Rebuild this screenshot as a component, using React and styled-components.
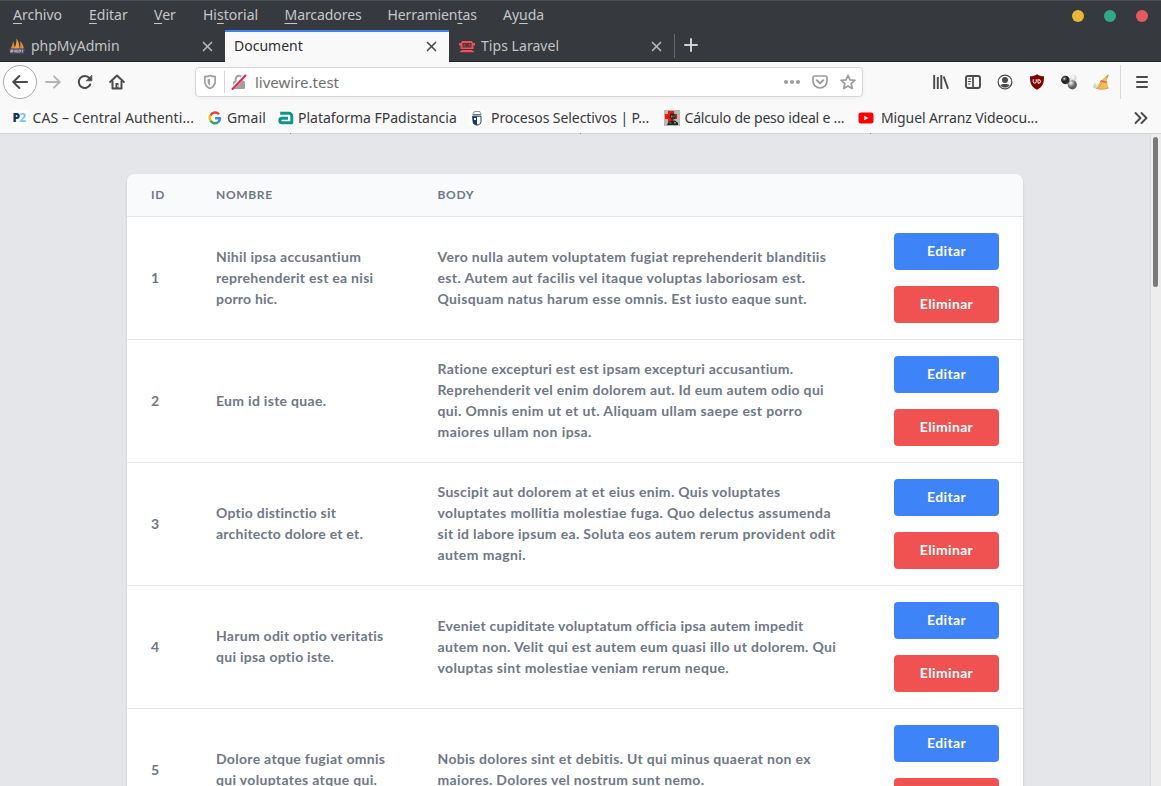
import React from 'react';
import styled, { createGlobalStyle } from 'styled-components';

const GlobalStyle = createGlobalStyle`
  *, *::before, *::after { box-sizing: border-box; }
  body { margin: 0; background: #e5e6ea; overflow: hidden; }
`;

/* ---------- browser window ---------- */

const Window = styled.div`
  display: flex;
  flex-direction: column;
  width: 1161px;
  height: 786px;
  overflow: hidden;
  font-family: 'Noto Sans', 'Open Sans', sans-serif;
  font-size: 14px;
  color: #38383a;
`;

const MenuBar = styled.header`
  display: flex;
  flex: none;
  align-items: center;
  height: 30px;
  padding: 0 13px;
  border-top: 1px solid #4b4e53;
  background: #36393e;
  color: #c6c7c9;
`;

const MenuItem = styled.span`
  flex: none;
  width: ${(p) => p.$width}px;
  padding-bottom: 2px;
  line-height: 27px;
  letter-spacing: ${(p) => p.$tracking || 0}px;
  white-space: nowrap;

  u {
    text-underline-offset: 3px;
    text-decoration-thickness: 1px;
    text-decoration-skip-ink: none;
  }
`;

const WindowButtons = styled.div`
  display: flex;
  gap: 20px;
  margin-left: auto;
`;

const WindowButton = styled.span`
  width: 12px;
  height: 12px;
  border-radius: 50%;
  background: ${(p) => p.$color};
`;

const TabStrip = styled.nav`
  display: flex;
  flex: none;
  height: 32px;
  background: #36393e;
  box-shadow: inset 0 -1px 0 #24252a;
`;

const Tab = styled.div`
  display: flex;
  align-items: center;
  gap: 6px;
  width: ${(p) => (p.$active ? 224 : 225)}px;
  padding: 0 12px 2px ${(p) => p.$inset || 9}px;
  border-top: 2px solid ${(p) => (p.$active ? '#3d84f0' : 'transparent')};
  background: ${(p) => (p.$active ? '#f9f9fa' : 'transparent')};
  color: ${(p) => (p.$active ? '#2f2f31' : '#c3c4c6')};
`;

const TabTitle = styled.span`
  flex: 1;
  line-height: 28px;
  letter-spacing: ${(p) => p.$tracking || 0}px;
  white-space: nowrap;
`;

const NewTab = styled.div`
  display: flex;
  align-items: center;
  height: 24px;
  margin-top: 4px;
  padding: 0 0 2px 9px;
  border-left: 1px solid #65686c;
  color: #d0d1d2;
`;

const NavBar = styled.div`
  display: flex;
  flex: none;
  align-items: center;
  height: 40px;
  padding: 0 11px 0 3px;
  background: #f9f9fa;
`;

const BackButton = styled.span`
  display: grid;
  place-items: center;
  width: 34px;
  height: 34px;
  border: 1px solid #ababad;
  border-radius: 50%;
  background: #fff;
`;

const NavIcons = styled.div`
  display: flex;
  gap: 16px;
  margin-left: 8px;
`;

const AddressBar = styled.div`
  display: flex;
  align-items: center;
  width: 668px;
  height: 30px;
  margin-left: 70px;
  padding: 0 6px;
  border: 1px solid #d8d8da;
  border-radius: 4px;
  background: #fff;
  box-shadow: 0 1px 4px rgba(0, 0, 0, 0.05);
`;

const SiteInfo = styled.span`
  display: flex;
  margin-left: 6px;
  padding: 3px 0 3px 6px;
  border-left: 1px solid #d7d7d9;
`;

const Address = styled.span`
  flex: 1;
  padding-left: 8px;
  font-size: 15px;
  line-height: 28px;
  color: #707072;
`;

const PageActions = styled.div`
  display: flex;
  gap: 12px;
`;

const Extensions = styled.div`
  display: flex;
  gap: 16px;
  margin-left: 70px;
`;

const AppMenu = styled.div`
  display: flex;
  align-items: center;
  height: 34px;
  margin-left: auto;
  padding-left: 13px;
  border-left: 1px solid #d9d9da;
`;

const BookmarkBar = styled.div`
  display: flex;
  flex: none;
  align-items: center;
  height: 31px;
  padding: 0 12px;
  background: #f9f9fa;
`;

const Bookmark = styled.span`
  display: flex;
  flex: none;
  align-items: center;
  gap: ${(p) => p.$gap}px;
  width: ${(p) => p.$width}px;
  line-height: 30px;
  letter-spacing: ${(p) => p.$tracking}px;
  white-space: nowrap;
`;

const Overflow = styled.span`
  display: flex;
  margin-left: auto;
`;

const Edge = styled.div`
  display: flex;
  flex: none;
  gap: 289px;
  height: 1px;
  padding-left: 290px;
  background: #d3d4d7;
`;

const Tick = styled.i`
  width: 1px;
  height: 1px;
  background: #85888e;
`;

/* ---------- page ---------- */

const Viewport = styled.div`
  display: flex;
  flex: 1;
  min-height: 0;
  overflow: hidden;
  background: #e5e6ea;
`;

const Page = styled.main`
  flex: 1;
  padding: 40px 127px 0;
`;

const ScrollTrack = styled.div`
  flex: none;
  width: 11px;
  padding: 3px 3px 0 2px;
  border-left: 1px solid #dadadc;
  background: #ededee;
`;

const ScrollThumb = styled.div`
  width: 5px;
  height: 150px;
  border-radius: 3px;
  background: #797979;
`;

const Table = styled.section`
  width: 896px;
  overflow: hidden;
  border-radius: 8px;
  background: #fff;
  box-shadow: 0 1px 3px rgba(0, 0, 0, 0.1), 0 1px 2px rgba(0, 0, 0, 0.06);
  font-family: Lato, 'Noto Sans', sans-serif;
  font-weight: 700;
  color: #6f7787;
`;

const Row = styled.div`
  display: grid;
  grid-template-columns: 65px 221.5px 456.5px 153px;
  align-items: center;
  height: 123px;
  border-bottom: 1px solid #e5e7eb;
`;

const HeadRow = styled(Row)`
  height: 43px;
  background: #f9fafc;
  font-size: 12px;
  letter-spacing: 0.65px;
`;

const Cell = styled.div`
  padding: 0 24px 2px;
`;

const Line = styled.div`
  font-size: 14px;
  line-height: 21px;
  letter-spacing: ${(p) => p.$tracking}px;
  white-space: nowrap;
`;

const Actions = styled.div`
  display: flex;
  flex-direction: column;
  gap: 16px;
  padding: 0 24px;
`;

const Button = styled.button`
  height: 37px;
  padding: 0 0 3px;
  border: 0;
  border-radius: 4px;
  background: ${(p) => (p.$danger ? '#f05252' : '#3f83f8')};
  color: #fff;
  font: 700 14px/21px Lato, 'Noto Sans', sans-serif;
  letter-spacing: 0.36px;
`;

/* ---------- icons ---------- */

const Icon = ({ size = 16, children }) => (
  <svg width={size} height={size} viewBox="0 0 16 16" fill="none" stroke="#4a4a4c" strokeWidth="2" strokeLinecap="round" strokeLinejoin="round">
    {children}
  </svg>
);

const Close = ({ color }) => (
  <svg width="11" height="11" viewBox="0 0 12 12" stroke={color} strokeWidth="1.8" strokeLinecap="round">
    <path d="M1.6 1.6l8.8 8.8M10.4 1.6l-8.8 8.8" />
  </svg>
);

const SailIcon = () => (
  <Icon>
    <g stroke="none">
      <path d="M1.5 10.5C3 8 3.8 6 4 3l2.3 7.5z" fill="#d98a3c" />
      <path d="M5.5 10.500C7 7 7.700 4 7.300.5c2.500 3 3.200 6.500 3.200 10z" fill="#f39a3d" />
      <path d="M10.800 10.500c.8-2.500.8-5 .2-7.500 2.300 2 3.500 5 3.800 7.500z" fill="#e38a32" />
      <path d="M0 11h16l-1.500 4.500h-13z" fill="#55567c" />
    </g>
    <path d="M2 14.500v-2.500h2v1.500H2M6 12v2m0-1h2m0-1v2.500M10 14.500V12h1.500v1.500M13.500 12v2" stroke="#c1c1d8" strokeWidth=".8" />
  </Icon>
);

const LaravelTipsIcon = () => (
  <Icon>
    <g stroke="none">
      <path d="M3 3h10l1 2h2v2.500h-1.500V11h-13V7.500H0V5h2z" fill="#ed5059" />
      <path d="M3.500 5h9v4.500h-9z" fill="#5e3038" />
      <path d="M2.500 12h11v1h1.500v1.200H1V13h1.500z" fill="#ed5059" />
    </g>
    <path d="M6 6.200L5 7.300l1 1M10 6.200l1 1.100-1 1" stroke="#b5616a" strokeWidth=".8" />
  </Icon>
);

const PlusIcon = () => (
  <svg width="14" height="14" viewBox="0 0 14 14" stroke="currentColor" strokeWidth="2" strokeLinecap="round">
    <path d="M7 1v12M1 7h12" />
  </svg>
);

const BackIcon = () => (
  <Icon><path d="M15 8H1.500M7.300 2L1.300 8l6 6" strokeWidth="2" /></Icon>
);
const ForwardIcon = () => (
  <Icon><path d="M1 8h13.500M9 2.300L14.700 8 9 13.700" stroke="#b4b4b5" strokeWidth="1.800" /></Icon>
);
const ReloadIcon = () => (
  <Icon>
    <path d="M13.200 10.500A6 6 0 1 1 12.500 4.200" strokeWidth="2" />
    <path d="M14.800 1.500v5.300H9.500z" fill="#4a4a4c" strokeWidth=".8" />
  </Icon>
);
const HomeIcon = () => (
  <Icon>
    <path d="M1.200 8L8 1.500 14.800 8" />
    <path d="M3.500 7.500v7h9v-7" />
    <path d="M6.500 9h3v5h-3z" fill="#4a4a4c" stroke="none" />
    <path d="M8.800 11.500v1" stroke="#fff" strokeWidth="1" />
  </Icon>
);
const ShieldIcon = () => (
  <Icon>
    <path d="M8 1.500c1.600.9 3.500 1.200 5.200 1.200v4.500c0 3.600-2.200 6-5.200 7.300-3-1.300-5.200-3.700-5.200-7.300V2.700C4.500 2.700 6.400 2.400 8 1.500z" stroke="#9f9fa0" strokeWidth="1.700" />
    <path d="M8 4.700c-.8.400-1.600.5-2.400.6v2.200c0 1.900.9 3.200 2.400 4.200z" fill="#9f9fa0" stroke="none" />
  </Icon>
);
const InsecureIcon = () => (
  <Icon>
    <path d="M4.700 7V5a3.300 3.300 0 0 1 6.600 0v2" stroke="#a0a0a1" />
    <rect x="2" y="7" width="12" height="8" rx="1.300" fill="#a0a0a1" stroke="none" />
    <path d="M.8 14.500L14 1.300" stroke="#fff" strokeWidth="3.400" strokeLinecap="butt" />
    <path d="M1.500 15L14.500 1.500" stroke="#f51b4b" strokeWidth="1.900" />
  </Icon>
);
const MoreIcon = () => (
  <Icon>
    <g fill="#9b9b9c" stroke="none"><circle cx="2" cy="8" r="2" /><circle cx="8" cy="8" r="2" /><circle cx="14" cy="8" r="2" /></g>
  </Icon>
);
const PocketIcon = () => (
  <Icon>
    <path d="M2.500 2h11A1.500 1.500 0 0 1 15 3.500V7A7 7 0 0 1 1 7V3.500A1.500 1.500 0 0 1 2.500 2z" stroke="#9b9b9c" strokeWidth="1.700" />
    <path d="M4.800 6.300L8 9.400l3.200-3.100" stroke="#9b9b9c" strokeWidth="2" />
  </Icon>
);
const StarIcon = () => (
  <Icon>
    <path d="M8 1.300l2 4.500 4.900.5-3.700 3.300 1.100 4.900L8 12l-4.300 2.500 1.100-4.900L1.100 6.300 6 5.800z" stroke="#9b9b9c" strokeWidth="1.700" />
  </Icon>
);
const LibraryIcon = () => (
  <Icon>
    <path d="M1.200 1v14M4.800 3v12M8.300 1v14" strokeLinecap="butt" strokeWidth="1.900" />
    <path d="M10.700 2.500L15 14.700" strokeLinecap="butt" strokeWidth="1.900" />
  </Icon>
);
const SidebarIcon = () => (
  <Icon>
    <rect x="1" y="2" width="14" height="12" rx="2" strokeWidth="1.900" />
    <path d="M8 2v12" strokeWidth="1.700" />
    <path d="M3.300 5h2.500M3.300 7.500h2.500M3.300 10h1.700" strokeWidth="1" />
  </Icon>
);
const AccountIcon = () => (
  <Icon>
    <circle cx="8" cy="8" r="6.900" strokeWidth="1.200" />
    <circle cx="8" cy="6" r="3" fill="#4a4a4c" stroke="none" />
    <path d="M3.300 11.200C5 9.700 11 9.700 12.700 11.200 11.500 13 9.800 13.500 8 13.500S4.500 13 3.300 11.200z" fill="#4a4a4c" stroke="none" />
  </Icon>
);
const BlockerIcon = () => (
  <Icon>
    <path d="M8 .2C10 1.700 12 2.200 15 2.300c0 7-.8 10-7 13.500C1.800 12.300 1 9.300 1 2.300 4 2.200 6 1.700 8 .2z" fill="#800000" stroke="none" />
    <path d="M4.200 5.700v2a1.500 1.500 0 0 0 3 0v-2" stroke="#fff" strokeWidth="1" />
    <path d="M9 5.700v3.500h.8a1.750 1.750 0 0 0 0-3.500z" stroke="#fff" strokeWidth="1" />
  </Icon>
);
const BallsIcon = () => (
  <Icon>
    <defs>
      <radialGradient id="ball-dark" cx=".38" cy=".35"><stop offset="0" stopColor="#eee" /><stop offset=".3" stopColor="#666" /><stop offset=".7" stopColor="#191919" /><stop offset="1" stopColor="#333" /></radialGradient>
      <radialGradient id="ball-grey" cx=".35" cy=".3"><stop offset="0" stopColor="#fff" /><stop offset=".5" stopColor="#a0a0a0" /><stop offset="1" stopColor="#5f5f5f" /></radialGradient>
      <radialGradient id="ball-light" cx=".4" cy=".35"><stop offset="0" stopColor="#fff" /><stop offset="1" stopColor="#d6d6d6" /></radialGradient>
    </defs>
    <g stroke="none">
      <circle cx="12.300" cy="4" r="3.300" fill="url(#ball-light)" />
      <circle cx="11.300" cy="10.800" r="4.600" fill="url(#ball-grey)" />
      <circle cx="4.400" cy="6" r="4.300" fill="url(#ball-dark)" />
    </g>
  </Icon>
);
const BroomIcon = () => (
  <Icon>
    <g stroke="none">
      <path d="M15 .3l.8.8-2.300 5.200-3-1.200z" fill="#d3954a" />
      <path d="M13 2.500c1.500 2.500.8 5.500 2.500 11.500-4 1.500-8.500 1.700-12.500.3C5.500 11 7 6 13 2.500z" fill="#efc05a" />
      <path d="M7.500 6.500c1.800-.7 4.300.3 6.300 1.500v1.300C11.500 8.700 9 8 6.800 8.300z" fill="#e56c50" />
      <path d="M0 14c0-2.500 1-4.500 2.500-5.500l.3 2.500 1.500-.7-1 4z" fill="#cbdcc6" />
    </g>
    <path d="M8.500 9.500c-.5 1.700-1.500 3-2.700 4M3 14.300c4 1.400 8.500 1.200 12.500-.3" stroke="#cf9138" strokeWidth=".8" />
  </Icon>
);
const BurgerIcon = () => (
  <Icon><path d="M3 3h10M3 8h10M3 13h10" /></Icon>
);
const ChevronsIcon = () => (
  <Icon><path d="M2.500 3l5 5-5 5M8.500 3l5 5-5 5" strokeWidth="1.900" /></Icon>
);

const Favicon = styled.span`
  width: 16px;
  height: 16px;
  padding-right: 2px;
  background: #fff;
  font: 800 12px/15px 'Open Sans', sans-serif;
  letter-spacing: -0.8px;
  text-align: center;
  color: #14315c;

  b { font-weight: 700; color: #7cc4ec; }
`;

const P2Icon = () => <Favicon>P<b>2</b></Favicon>;
const GoogleIcon = () => (
  <Icon>
    <circle cx="8" cy="8" r="8" fill="#fff" stroke="none" />
    <g strokeWidth="2.500" strokeLinecap="butt">
      <path d="M12 4.300A5.100 5.100 0 0 0 3.500 5.500" stroke="#ea4335" />
      <path d="M3.500 5.500a5.100 5.100 0 0 0 0 5.200" stroke="#fbbc05" />
      <path d="M3.500 10.700a5.100 5.100 0 0 0 7.800 1.300" stroke="#34a853" />
      <path d="M11.300 12c1.200-1.100 1.700-2.300 1.700-3.800H8" stroke="#4285f4" />
    </g>
  </Icon>
);
const CampusIcon = () => (
  <Icon>
    <path d="M2.200 3.200h8.600a3 3 0 0 1 3 3v6.600H4a2.200 2.200 0 0 1 0-4.500h6" stroke="#0c9688" strokeWidth="2.900" strokeLinecap="butt" />
  </Icon>
);
const CouncilIcon = () => (
  <Icon>
    <path d="M0 0h16v16H0z" fill="#fff" stroke="none" />
    <path d="M4 3.500l1.500-2h5l1.500 2" stroke="#8b98ab" strokeWidth="1.200" />
    <path d="M4 4.700h8" stroke="#42597c" strokeWidth="1" />
    <path d="M4 6.200h8v5.500c0 2-1.800 3.300-4 3.300s-4-1.300-4-3.300z" stroke="#183a68" strokeWidth="1" />
    <path d="M4 6.500h4V15c-2.500 0-4-1.300-4-3.300z" fill="#183a68" stroke="none" />
    <path d="M5 8h2v2H5z" fill="#fff" stroke="none" />
  </Icon>
);
const HealthIcon = () => (
  <Icon>
    <g stroke="none">
      <path d="M0 0h16v16H0z" fill="#b9b9b9" />
      <path d="M4 1h6v3h3v5H9v3H4V9H1V4h3z" fill="#f2120f" />
      <path d="M7 3.500h3l1.500 1.500v3L10 9.500H7.500L6 7.500V5z" fill="#1f2b20" />
      <path d="M3 15l1.500-3L8 10.500h3l3 2.500v2z" fill="#182818" />
      <path d="M7 5.500h1.500v2H7zM9.500 5.500h1v1.500h-1zM5.500 12.500h2v1h-2zM10 12h2v1.500h-2z" fill="#62a95c" />
    </g>
  </Icon>
);
const VideoIcon = () => (
  <Icon>
    <rect x="0.500" y="2.600" width="15" height="10.800" rx="2.500" fill="#f00" stroke="none" />
    <path d="M6.300 5.700v4.600L10.400 8z" fill="#fff" stroke="none" />
  </Icon>
);

/* ---------- data ---------- */

const bookmarks = [
  { icon: P2Icon, label: 'CAS – Central Authenti...', width: 195, gap: 4.5, tracking: 0.12 },
  { icon: GoogleIcon, label: 'Gmail', width: 71, gap: 4, tracking: 0.1 },
  { icon: CampusIcon, label: 'Plataforma FPadistancia', width: 191, gap: 4, tracking: 0 },
  { icon: CouncilIcon, label: 'Procesos Selectivos | P...', width: 195, gap: 6, tracking: -0.08 },
  { icon: HealthIcon, label: 'Cálculo de peso ideal e ...', width: 194, gap: 4.5, tracking: -0.19 },
  { icon: VideoIcon, label: 'Miguel Arranz Videocu...', width: 190, gap: 7, tracking: -0.1 },
];

const rows = [
  {
    id: 1,
    name: [['Nihil ipsa accusantium', 0.3], ['reprehenderit est ea nisi', 0.28], ['porro hic.', 0.2]],
    body: [
      ['Vero nulla autem voluptatem fugiat reprehenderit blanditiis', 0.36],
      ['est. Autem aut facilis vel itaque voluptas laboriosam est.', 0.37],
      ['Quisquam natus harum esse omnis. Est iusto eaque sunt.', 0.34],
    ],
  },
  {
    id: 2,
    name: [['Eum id iste quae.', 0.3]],
    body: [
      ['Ratione excepturi est est ipsam excepturi accusantium.', 0.29],
      ['Reprehenderit vel enim dolorem aut. Id eum autem odio qui', 0.31],
      ['qui. Omnis enim ut et ut. Aliquam ullam saepe est porro', 0.38],
      ['maiores ullam non ipsa.', 0.41],
    ],
  },
  {
    id: 3,
    name: [['Optio distinctio sit', 0.24], ['architecto dolore et et.', 0.22]],
    body: [
      ['Suscipit aut dolorem at et eius enim. Quis voluptates', 0.33],
      ['voluptates mollitia molestiae fuga. Quo delectus assumenda', 0.37],
      ['sit id labore ipsum ea. Soluta eos autem rerum provident odit', 0.34],
      ['autem magni.', 0.4],
    ],
  },
  {
    id: 4,
    name: [['Harum odit optio veritatis', 0.27], ['qui ipsa optio iste.', 0.27]],
    body: [
      ['Eveniet cupiditate voluptatum officia ipsa autem impedit', 0.27],
      ['autem non. Velit qui est autem eum quasi illo ut dolorem. Qui', 0.33],
      ['voluptas sint molestiae veniam rerum neque.', 0.34],
    ],
  },
  {
    id: 5,
    name: [['Dolore atque fugiat omnis', 0.3], ['qui voluptates atque qui.', 0.33]],
    body: [
      ['Nobis dolores sint et debitis. Ut qui minus quaerat non ex', 0.31],
      ['maiores. Dolores vel nostrum sunt nemo.', 0.34],
    ],
  },
];

const Lines = ({ lines }) => lines.map(([text, tracking]) => <Line key={text} $tracking={tracking}>{text}</Line>);

export default function App() {
  return (
    <Window>
      <GlobalStyle />
      <MenuBar>
        <MenuItem $width={76}><u>A</u>rchivo</MenuItem>
        <MenuItem $width={65}><u>E</u>ditar</MenuItem>
        <MenuItem $width={49}><u>V</u>er</MenuItem>
        <MenuItem $width={81.5}>Hi<u>s</u>torial</MenuItem>
        <MenuItem $width={103} $tracking={-0.07}><u>M</u>arcadores</MenuItem>
        <MenuItem $width={115.5} $tracking={-0.08}>Herramien<u>t</u>as</MenuItem>
        <MenuItem $width={60}>Ay<u>u</u>da</MenuItem>
        <WindowButtons>
          <WindowButton $color="#e8b738" />
          <WindowButton $color="#2fa88b" />
          <WindowButton $color="#e45a62" />
        </WindowButtons>
      </MenuBar>
      <TabStrip>
        <Tab><SailIcon /><TabTitle>phpMyAdmin</TabTitle><Close color="#b7b8ba" /></Tab>
        <Tab $active><TabTitle>Document</TabTitle><Close color="#4b4b4d" /></Tab>
        <Tab $inset={10}><LaravelTipsIcon /><TabTitle $tracking={0.05}>Tips Laravel</TabTitle><Close color="#b7b8ba" /></Tab>
        <NewTab><PlusIcon /></NewTab>
      </TabStrip>
      <NavBar>
        <BackButton><BackIcon /></BackButton>
        <NavIcons><ForwardIcon /><ReloadIcon /><HomeIcon /></NavIcons>
        <AddressBar>
          <ShieldIcon />
          <SiteInfo><InsecureIcon /></SiteInfo>
          <Address>livewire.test</Address>
          <PageActions><MoreIcon /><PocketIcon /><StarIcon /></PageActions>
        </AddressBar>
        <Extensions>
          <LibraryIcon /><SidebarIcon /><AccountIcon /><BlockerIcon /><BallsIcon /><BroomIcon />
        </Extensions>
        <AppMenu><BurgerIcon /></AppMenu>
      </NavBar>
      <BookmarkBar>
        {bookmarks.map(({ icon: Glyph, label, width, gap, tracking }) => (
          <Bookmark key={label} $width={width} $gap={gap} $tracking={tracking}><Glyph />{label}</Bookmark>
        ))}
        <Overflow><ChevronsIcon /></Overflow>
      </BookmarkBar>
      <Edge><Tick /><Tick /><Tick /></Edge>
      <Viewport>
        <Page>
          <Table>
            <HeadRow>
              <Cell>ID</Cell>
              <Cell>NOMBRE</Cell>
              <Cell>BODY</Cell>
            </HeadRow>
            {rows.map((row) => (
              <Row key={row.id}>
                <Cell><Line $tracking={0}>{row.id}</Line></Cell>
                <Cell><Lines lines={row.name} /></Cell>
                <Cell><Lines lines={row.body} /></Cell>
                <Actions>
                  <Button>Editar</Button>
                  <Button $danger>Eliminar</Button>
                </Actions>
              </Row>
            ))}
          </Table>
        </Page>
        <ScrollTrack><ScrollThumb /></ScrollTrack>
      </Viewport>
    </Window>
  );
}
